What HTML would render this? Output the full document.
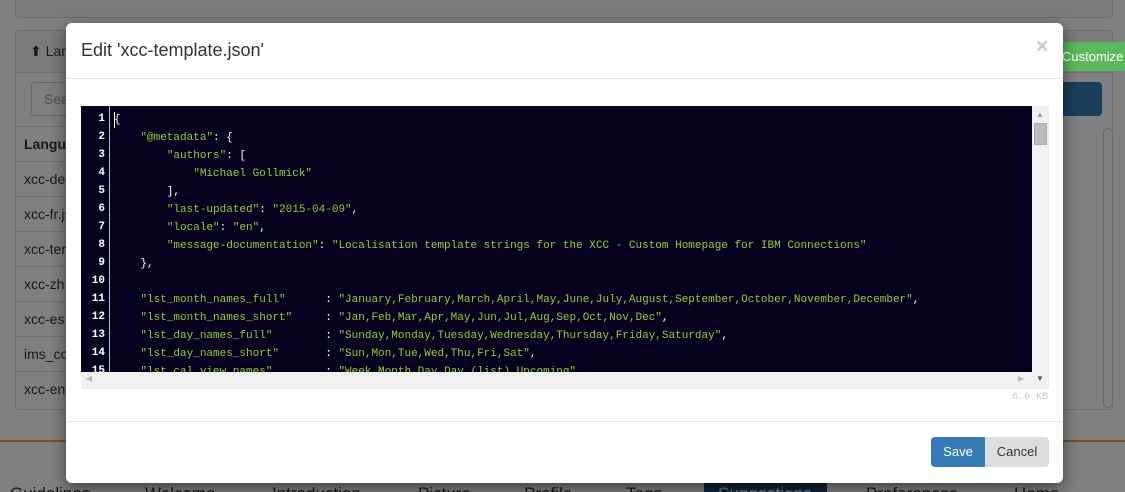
<!DOCTYPE html>
<html><head><style>
*{box-sizing:border-box;margin:0;padding:0}
body{width:1125px;height:492px;overflow:hidden;position:relative;background:#fff;font-family:"Liberation Sans",sans-serif;color:#333}
.a{position:absolute}
.panel{border:1px solid #ddd;border-radius:4px;background:#fff}
.row{position:absolute;left:16px;width:180px;height:35px;border-top:1px solid #ddd;font-size:14px;padding:9px 8px}
.ov{position:absolute;inset:0;background:rgba(0,0,0,.5)}
.modal{position:absolute;left:66px;top:23px;width:997px;height:460px;background:#fff;border-radius:6px;box-shadow:0 5px 15px rgba(0,0,0,.5)}
.code{position:absolute;left:15px;top:83px;width:968px;height:283px;background:#f0f0f0}
.dark{position:absolute;left:0;top:0;width:951px;height:266px;background:#08001f;overflow:hidden}
.gut{position:absolute;left:0;top:0;width:29px;height:266px;border-right:1px solid #bbb}
.ln{position:absolute;left:0;width:24px;text-align:right;color:#fff;font:bold 11px/18px "Liberation Mono",monospace}
pre{position:absolute;left:33px;top:5px;color:#fff;font:11px/18px "Liberation Mono",monospace}
.s{color:#8fd22d}
.tab{position:absolute;top:483px;height:9px;font-size:17px;line-height:22px;color:#333;overflow:hidden}
.kb{font:10px/12px "Liberation Mono",monospace;color:#ccc}
</style></head><body>
<div class="a panel" style="left:15px;top:-10px;width:1098px;height:28px;background:#f5f5f5"></div>
<div class="a panel" style="left:15px;top:30px;width:1098px;height:380px"></div>
<div class="a" style="left:16px;top:31px;width:1096px;height:42px;background:#f5f5f5;border-bottom:1px solid #ddd;font-size:14px;padding:12px 14px">⬆ Language Files</div>
<div class="a" style="left:31px;top:82px;width:200px;height:34px;border:1px solid #ccc;border-radius:4px;font-size:14px;padding:8px 12px;color:#999">Search</div>
<div class="a" style="left:1040px;top:82px;width:62px;height:34px;background:#337ab7;border-radius:4px"></div>
<div class="row" style="top:126px;font-weight:bold">Language</div>
<div class="row" style="top:161px">xcc-de.json</div>
<div class="row" style="top:196px">xcc-fr.json</div>
<div class="row" style="top:231px">xcc-template.json</div>
<div class="row" style="top:266px">xcc-zh.json</div>
<div class="row" style="top:301px">xcc-es.json</div>
<div class="row" style="top:336px">ims_co.json</div>
<div class="row" style="top:371px">xcc-en.json</div>
<div class="a" style="left:1103px;top:128px;width:10px;height:280px;border:1px solid #ccc;border-radius:5px"></div>
<div class="a" style="left:0;top:440px;width:1125px;height:2px;background:#e8a060"></div>
<div class="tab" style="left:10px">Guidelines</div>
<div class="tab" style="left:145px">Welcome</div>
<div class="tab" style="left:272px">Introduction</div>
<div class="tab" style="left:418px">Picture</div>
<div class="tab" style="left:524px">Profile</div>
<div class="tab" style="left:626px">Tags</div>
<div class="a" style="left:704px;top:483px;width:123px;height:9px;background:#1a4a70"></div>
<div class="tab" style="left:718px;color:#fff">Suggestions</div>
<div class="tab" style="left:866px">Preferences</div>
<div class="tab" style="left:1014px">Home</div>
<div class="ov"></div>
<div class="a" style="left:1040px;top:42px;width:85px;height:29px;background:#5cb85c;color:#fff;font-size:13px;padding:7px 0 0 22px;border-radius:4px 0 0 4px">Customize</div>
<div class="modal">
 <div class="a" style="left:15px;top:17px;font-size:18px;color:#333">Edit 'xcc-template.json'</div>
 <div class="a" style="left:970px;top:12px;font-size:21px;font-weight:bold;color:#ccc">×</div>
 <div class="a" style="left:0;top:55px;width:997px;height:1px;background:#e5e5e5"></div>
 <div class="code">
  <div class="dark">
   <div class="gut">
    <div class="ln" style="top:4px">1<br>2<br>3<br>4<br>5<br>6<br>7<br>8<br>9<br>10<br>11<br>12<br>13<br>14<br>15</div>
   </div>
   <div class="a" style="left:33px;top:6px;width:1px;height:16px;background:#fff"></div>
<pre>{
    <span class="s">"@metadata"</span>: {
        <span class="s">"authors"</span>: [
            <span class="s">"Michael Gollmick"</span>
        ],
        <span class="s">"last-updated"</span>: <span class="s">"2015-04-09"</span>,
        <span class="s">"locale"</span>: <span class="s">"en"</span>,
        <span class="s">"message-documentation"</span>: <span class="s">"Localisation template strings for the XCC - Custom Homepage for IBM Connections"</span>
    },

    <span class="s">"lst_month_names_full"</span>      : <span class="s">"January,February,March,April,May,June,July,August,September,October,November,December"</span>,
    <span class="s">"lst_month_names_short"</span>     : <span class="s">"Jan,Feb,Mar,Apr,May,Jun,Jul,Aug,Sep,Oct,Nov,Dec"</span>,
    <span class="s">"lst_day_names_full"</span>        : <span class="s">"Sunday,Monday,Tuesday,Wednesday,Thursday,Friday,Saturday"</span>,
    <span class="s">"lst_day_names_short"</span>       : <span class="s">"Sun,Mon,Tue,Wed,Thu,Fri,Sat"</span>,
    <span class="s">"lst_cal_view_names"</span>        : <span class="s">"Week,Month,Day,Day (list),Upcoming"</span>
</pre>
  </div>
  <div class="a" style="left:953px;top:17px;width:13px;height:22px;background:#bbb;border:1px solid #aaa"></div>
  <div class="a" style="left:955px;top:4px;font-size:8px;color:#999">▲</div>
  <div class="a" style="left:955px;top:268px;font-size:8px;color:#555">▼</div>
  <div class="a" style="left:5px;top:268px;font-size:8px;color:#bbb">◀</div>
  <div class="a" style="left:937px;top:268px;font-size:8px;color:#bbb">▶</div>
 </div>
 <div class="a kb" style="left:946px;top:369px">6.6 KB</div>
 <div class="a" style="left:0;top:398px;width:997px;height:1px;background:#e5e5e5"></div>
 <div class="a" style="left:865px;top:414px;width:54px;height:30px;background:#337ab7;border-radius:4px 0 0 4px;color:#fff;font-size:13px;text-align:center;line-height:30px">Save</div>
 <div class="a" style="left:919px;top:414px;width:64px;height:30px;background:#ddd;border-radius:0 4px 4px 0;color:#333;font-size:13px;text-align:center;line-height:30px">Cancel</div>
</div>
</body></html>
